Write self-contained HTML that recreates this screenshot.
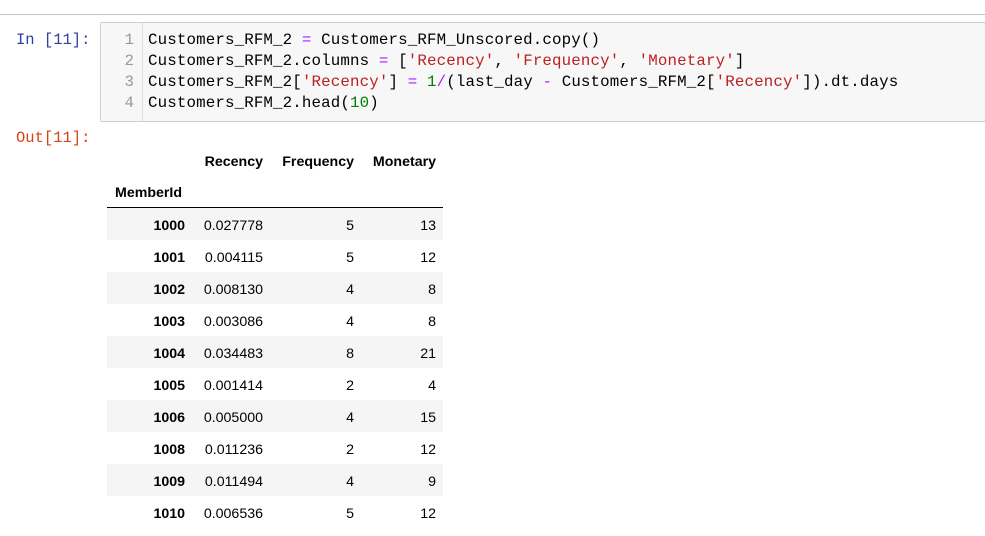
<!DOCTYPE html>
<html><head><style>
body{margin:0;width:985px;height:536px;background:#fff;position:relative;overflow:hidden;font-family:"Liberation Sans",Arial,sans-serif}
.top{position:absolute;left:0;top:14px;width:985px;height:1px;background:#c4c4c4}
.pr{position:absolute;font-family:"Liberation Mono",monospace;font-size:15.5px}
.box{position:absolute;left:100px;top:22px;width:884px;height:98px;background:#f7f7f7;border:1px solid #cfcfcf;border-radius:2px}
.gut{position:absolute;left:0;top:0;width:41px;height:98px;border-right:1px solid #ddd;background:#f7f7f7}
.ln{position:absolute;font-family:"Liberation Mono",monospace;font-size:15.8px;white-space:pre;line-height:21px}
.num{color:#999;text-align:right;width:33px;left:0}
.code{left:47px;color:#000;letter-spacing:0.14px}
.o{color:#aa22ff}.s{color:#ba2121}.n{color:#008000}
table{position:absolute;left:107px;top:144px;border-collapse:collapse;font-size:14.2px;color:#000}
td,th{padding:3px 7px 0 0;text-align:right;height:29px;box-sizing:content-box}
th{font-weight:bold}
tbody tr:nth-child(odd){background:#f5f5f5}
thead tr.b th{border-bottom:1px solid #000;height:28px}
</style></head><body>
<div class="top"></div>
<div class="pr" style="left:16px;top:31px;color:#303f9f">In [11]:</div>
<div class="box"><div class="gut"></div>
<div class="ln num" style="top:7px">1<br>2<br>3<br>4</div>
<div class="ln code" style="top:7px">Customers_RFM_2 <span class="o">=</span> Customers_RFM_Unscored.copy()
Customers_RFM_2.columns <span class="o">=</span> [<span class="s">'Recency'</span>, <span class="s">'Frequency'</span>, <span class="s">'Monetary'</span>]
Customers_RFM_2[<span class="s">'Recency'</span>] <span class="o">=</span> <span class="n">1</span><span class="o">/</span>(last_day <span class="o">-</span> Customers_RFM_2[<span class="s">'Recency'</span>]).dt.days
Customers_RFM_2.head(<span class="n">10</span>)</div></div>
<div class="pr" style="left:16px;top:129px;color:#d84315">Out[11]:</div>
<table>
<colgroup><col style="width:85px"><col style="width:78px"><col style="width:91px"><col style="width:82px"></colgroup>
<thead><tr><th></th><th>Recency</th><th>Frequency</th><th>Monetary</th></tr>
<tr class="b"><th style="text-align:left;padding-left:8px">MemberId</th><th></th><th></th><th></th></tr></thead>
<tbody>
<tr><th>1000</th><td>0.027778</td><td>5</td><td>13</td></tr>
<tr><th>1001</th><td>0.004115</td><td>5</td><td>12</td></tr>
<tr><th>1002</th><td>0.008130</td><td>4</td><td>8</td></tr>
<tr><th>1003</th><td>0.003086</td><td>4</td><td>8</td></tr>
<tr><th>1004</th><td>0.034483</td><td>8</td><td>21</td></tr>
<tr><th>1005</th><td>0.001414</td><td>2</td><td>4</td></tr>
<tr><th>1006</th><td>0.005000</td><td>4</td><td>15</td></tr>
<tr><th>1008</th><td>0.011236</td><td>2</td><td>12</td></tr>
<tr><th>1009</th><td>0.011494</td><td>4</td><td>9</td></tr>
<tr><th>1010</th><td>0.006536</td><td>5</td><td>12</td></tr>
</tbody></table>
</body></html>
